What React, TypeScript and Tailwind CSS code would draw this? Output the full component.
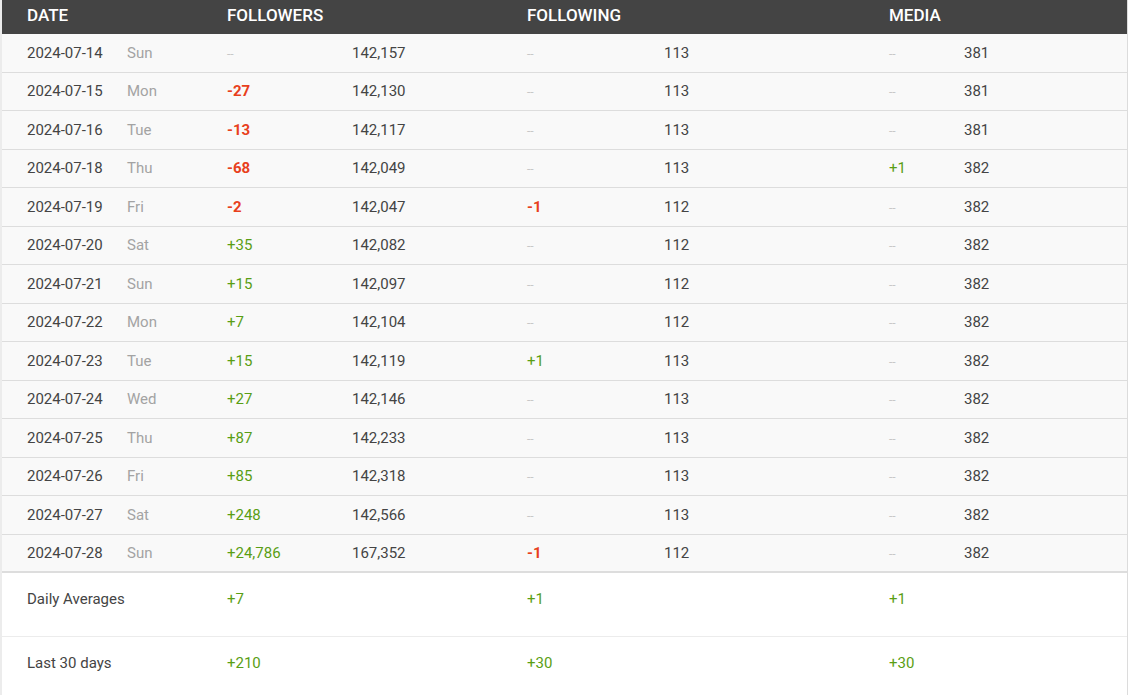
import React from "react";

type Row = {
  date: string;
  day: string;
  fd: string;
  ft: string;
  gd: string;
  gt: string;
  md: string;
  mt: string;
};

const rows: Row[] = [
  { date: "2024-07-14", day: "Sun", fd: "--", ft: "142,157", gd: "--", gt: "113", md: "--", mt: "381" },
  { date: "2024-07-15", day: "Mon", fd: "-27", ft: "142,130", gd: "--", gt: "113", md: "--", mt: "381" },
  { date: "2024-07-16", day: "Tue", fd: "-13", ft: "142,117", gd: "--", gt: "113", md: "--", mt: "381" },
  { date: "2024-07-18", day: "Thu", fd: "-68", ft: "142,049", gd: "--", gt: "113", md: "+1", mt: "382" },
  { date: "2024-07-19", day: "Fri", fd: "-2", ft: "142,047", gd: "-1", gt: "112", md: "--", mt: "382" },
  { date: "2024-07-20", day: "Sat", fd: "+35", ft: "142,082", gd: "--", gt: "112", md: "--", mt: "382" },
  { date: "2024-07-21", day: "Sun", fd: "+15", ft: "142,097", gd: "--", gt: "112", md: "--", mt: "382" },
  { date: "2024-07-22", day: "Mon", fd: "+7", ft: "142,104", gd: "--", gt: "112", md: "--", mt: "382" },
  { date: "2024-07-23", day: "Tue", fd: "+15", ft: "142,119", gd: "+1", gt: "113", md: "--", mt: "382" },
  { date: "2024-07-24", day: "Wed", fd: "+27", ft: "142,146", gd: "--", gt: "113", md: "--", mt: "382" },
  { date: "2024-07-25", day: "Thu", fd: "+87", ft: "142,233", gd: "--", gt: "113", md: "--", mt: "382" },
  { date: "2024-07-26", day: "Fri", fd: "+85", ft: "142,318", gd: "--", gt: "113", md: "--", mt: "382" },
  { date: "2024-07-27", day: "Sat", fd: "+248", ft: "142,566", gd: "--", gt: "113", md: "--", mt: "382" },
  { date: "2024-07-28", day: "Sun", fd: "+24,786", ft: "167,352", gd: "-1", gt: "112", md: "--", mt: "382" },
];

function Delta({ v }: { v: string }) {
  if (v === "--") return <span className="text-[#c8c8c8] text-[12px]">--</span>;
  if (v.startsWith("-")) return <span className="text-[#e8401c] font-bold">{v}</span>;
  return <span className="text-[#5a9e14]">{v}</span>;
}

export default function App() {
  return (
    <div
      className="w-[1128px] h-[695px] overflow-hidden bg-white text-[#444] text-[15px]"
      style={{ fontFamily: "Roboto, 'Liberation Sans', sans-serif" }}
    >
      <div className="w-[1128px] border-l-2 border-r border-l-[#ececec] border-r-[#dcdcdc]">
        <div className="flex h-[34px] items-center pb-[2px] bg-[#444444] text-white text-[17px] font-medium">
          <div className="w-[225px] pl-[25px]">DATE</div>
          <div className="w-[300px]">FOLLOWERS</div>
          <div className="w-[362px]">FOLLOWING</div>
          <div className="flex-1">MEDIA</div>
        </div>
        {rows.map((r, i) => (
          <div
            key={r.date}
            className={
              "flex items-center bg-[#f9f9f9] h-[38.5px] " +
              (i === rows.length - 1
                ? "border-b-2 border-[#dddddd]"
                : "border-b border-[#dddddd]")
            }
          >
            <div className="w-[125px] pl-[25px]">{r.date}</div>
            <div className="w-[100px] text-[#a3a3a3]">{r.day}</div>
            <div className="w-[125px]"><Delta v={r.fd} /></div>
            <div className="w-[175px]">{r.ft}</div>
            <div className="w-[137px]"><Delta v={r.gd} /></div>
            <div className="w-[225px]">{r.gt}</div>
            <div className="w-[75px]"><Delta v={r.md} /></div>
            <div className="flex-1">{r.mt}</div>
          </div>
        ))}
        <div className="flex h-[64px] pt-[16px] border-b border-[#ececec]">
          <div className="w-[225px] pl-[25px] leading-[20px]">Daily Averages</div>
          <div className="w-[300px] leading-[20px]"><Delta v="+7" /></div>
          <div className="w-[362px] leading-[20px]"><Delta v="+1" /></div>
          <div className="flex-1 leading-[20px]"><Delta v="+1" /></div>
        </div>
        <div className="flex h-[65px] pt-[16px]">
          <div className="w-[225px] pl-[25px] leading-[20px]">Last 30 days</div>
          <div className="w-[300px] leading-[20px]"><Delta v="+210" /></div>
          <div className="w-[362px] leading-[20px]"><Delta v="+30" /></div>
          <div className="flex-1 leading-[20px]"><Delta v="+30" /></div>
        </div>
      </div>
    </div>
  );
}
